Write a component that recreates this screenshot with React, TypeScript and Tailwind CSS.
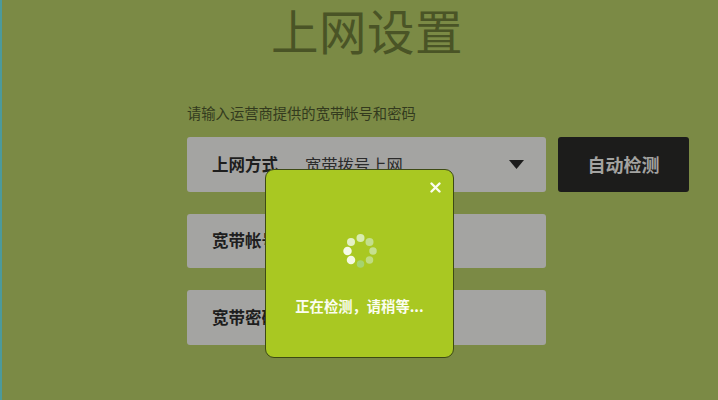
const cjk = { fontFamily: '"Noto Sans CJK SC", "Liberation Sans", sans-serif' };

const dots = [
  { x: 40.5, y: 20, c: "#d9ecb0", s: 8 },
  { x: 49.5, y: 24, c: "#c4df8c", s: 8 },
  { x: 53, y: 33, c: "#c6e08e", s: 7.5 },
  { x: 49.5, y: 42, c: "#c0dc80", s: 7.5 },
  { x: 40.5, y: 46, c: "#a5d36f", s: 7.5 },
  { x: 31, y: 42, c: "#f4f9e2", s: 8.5 },
  { x: 27.5, y: 33, c: "#f6fbe8", s: 8.5 },
  { x: 31, y: 24, c: "#e4f1c4", s: 8 },
];

function Field({ label, children }: { label: string; children?: React.ReactNode }) {
  return (
    <div className="flex h-[54.5px] w-[359px] items-center rounded-[3px] bg-[#a4a4a2] pl-[25px] pr-[22px]">
      <span className="w-[93px] shrink-0 whitespace-nowrap text-[16.5px] font-bold text-[#1e1e1e]">{label}</span>
      {children}
    </div>
  );
}

export default function App() {
  return (
    <div className="relative h-[400px] w-[718px] overflow-hidden border-l-2 border-[#4c9a9a] bg-[#7b8a45]" style={cjk}>
      <div className="flex flex-col pl-[185px]">
        <h1 className="ml-[84px] h-[60px] whitespace-nowrap text-[47.5px] font-normal leading-[60px] tracking-[0.5px] text-[#4a5426]">
          上网设置
        </h1>
        <p className="mt-[43px] h-[20px] whitespace-nowrap text-[14.3px] leading-[20px] text-[#333a1e]">
          请输入运营商提供的宽带帐号和密码
        </p>
        <div className="mt-[14px] flex flex-col gap-[22px]">
          <div className="flex items-start gap-[12px]">
            <Field label="上网方式">
              <span className="flex-1 whitespace-nowrap text-[16.3px] text-[#2b2b2b]">宽带拨号上网</span>
              <svg width="15" height="9" viewBox="0 0 15 9" className="shrink-0">
                <path d="M0 0H15L7.5 9Z" fill="#1c1c1c" />
              </svg>
            </Field>
            <button className="flex h-[54.5px] w-[131px] items-center justify-center rounded-[3px] bg-[#1c1c1b] text-[18px] font-bold text-[#a3a3a1]">
              自动检测
            </button>
          </div>
          <Field label="宽带帐号" />
          <Field label="宽带密码" />
        </div>
      </div>

      <div className="absolute left-[263px] top-[169px] flex h-[189px] w-[189px] flex-col items-center rounded-[9px] border-[1.5px] border-[#3d4a14] bg-[#a9c822]">
        <button className="absolute right-[10px] top-[9px] flex h-[16px] w-[16px] items-center justify-center">
          <svg width="11" height="11" viewBox="0 0 11 11">
            <path d="M1.5 1.5L9.5 9.5M9.5 1.5L1.5 9.5" stroke="#fafcef" strokeWidth="2.4" strokeLinecap="round" />
          </svg>
        </button>
        <div className="relative mt-[48px] h-[66px] w-[80px]">
          <svg width="80" height="66" viewBox="0 0 80 66" className="absolute left-0 top-0">
            {dots.map((d, i) => (
              <circle key={i} cx={d.x} cy={d.y} r={d.s / 2} fill={d.c} />
            ))}
          </svg>
        </div>
        <p className="mt-[12px] whitespace-nowrap text-[14.3px] font-bold leading-[20px] text-[#fbfdf0]">
          正在检测，请稍等...
        </p>
      </div>
    </div>
  );
}
